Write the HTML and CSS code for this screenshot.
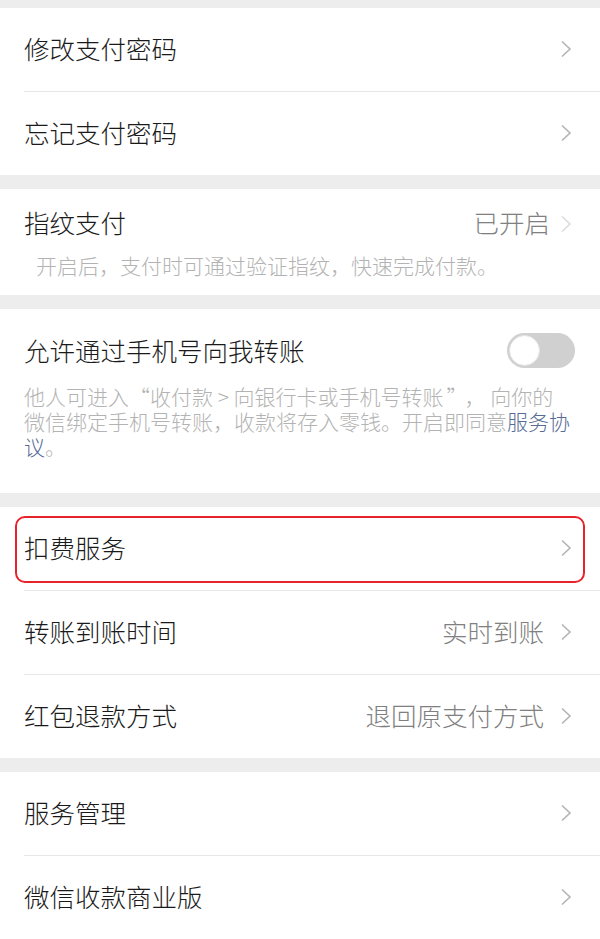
FILE: index.html
```html
<!DOCTYPE html>
<html lang="zh-CN">
<head>
<meta charset="utf-8">
<title>支付管理</title>
<link rel="stylesheet" href="styles.css">
</head>
<body>
<div class="page">
  <section class="group">
    <div class="cell"><div class="cell-inner"><span class="title">修改支付密码</span><span class="fill"></span><svg class="arrow" viewBox="0 0 12 18"><path d="M2 1.5 L10 9 L2 16.5"/></svg></div></div>
    <div class="cell"><div class="cell-inner"><span class="title">忘记支付密码</span><span class="fill"></span><svg class="arrow" viewBox="0 0 12 18"><path d="M2 1.5 L10 9 L2 16.5"/></svg></div></div>
  </section>

  <section class="group block finger">
    <div class="block-head"><span class="title">指纹支付</span><span class="fill"></span><span class="value">已开启</span><svg class="arrow faded" viewBox="0 0 12 18"><path d="M2 1.5 L10 9 L2 16.5"/></svg></div>
    <p class="desc desc-indent">开启后，支付时可通过验证指纹，快速完成付款。</p>
  </section>

  <section class="group block phone">
    <div class="block-head"><span class="title">允许通过手机号向我转账</span><span class="fill"></span><span class="switch"><span class="knob"></span></span></div>
    <p class="desc">他人可进入<span class="q q-open">“</span>收付款 &gt; 向银行卡或手机号转账<span class="q q-close">”</span>， 向你的<br>微信绑定手机号转账，收款将存入零钱。开启即同意<a class="link">服务协<br>议</a>。</p>
  </section>

  <section class="group">
    <div class="cell marked"><div class="cell-inner"><span class="title">扣费服务</span><span class="fill"></span><svg class="arrow" viewBox="0 0 12 18"><path d="M2 1.5 L10 9 L2 16.5"/></svg></div><span class="mark"></span></div>
    <div class="cell"><div class="cell-inner"><span class="title">转账到账时间</span><span class="fill"></span><span class="value">实时到账</span><svg class="arrow" viewBox="0 0 12 18"><path d="M2 1.5 L10 9 L2 16.5"/></svg></div></div>
    <div class="cell"><div class="cell-inner"><span class="title">红包退款方式</span><span class="fill"></span><span class="value">退回原支付方式</span><svg class="arrow" viewBox="0 0 12 18"><path d="M2 1.5 L10 9 L2 16.5"/></svg></div></div>
  </section>

  <section class="group">
    <div class="cell"><div class="cell-inner"><span class="title">服务管理</span><span class="fill"></span><svg class="arrow" viewBox="0 0 12 18"><path d="M2 1.5 L10 9 L2 16.5"/></svg></div></div>
    <div class="cell"><div class="cell-inner"><span class="title">微信收款商业版</span><span class="fill"></span><svg class="arrow" viewBox="0 0 12 18"><path d="M2 1.5 L10 9 L2 16.5"/></svg></div></div>
  </section>
</div>
</body>
</html>
```

FILE: styles.css
```css
html, body {
  margin: 0;
  padding: 0;
  background: #ededed;
}
body {
  font-family: "Noto Sans CJK SC", "Noto Sans", sans-serif;
  font-weight: 300;
  color: #1a1a1a;
  width: 600px;
  height: 939px;
  overflow: hidden;
}
.page {
  display: flex;
  flex-direction: column;
  gap: 14px;
  padding-top: 8px;
}
.group {
  background: #ffffff;
}
.cell {
  position: relative;
  padding-left: 24px;
}
.cell-inner {
  display: flex;
  align-items: center;
  height: 83px;
  box-sizing: border-box;
  padding: 0 28px 4px 0;
}
.cell + .cell .cell-inner {
  border-top: 1px solid #e7e7e7;
  height: 84px;
}
.title {
  font-size: 25.5px;
  line-height: 38px;
  color: #1a1a1a;
}
.fill {
  flex: 1;
}
.value {
  font-size: 25.5px;
  line-height: 38px;
  color: #808080;
  margin-right: 16px;
}
.arrow {
  width: 12px;
  height: 18px;
  margin-top: 3px;
  fill: none;
  stroke: #b3b3b3;
  stroke-width: 1.6;
}
.arrow.faded {
  stroke: #dcdcdc;
}
.block {
  padding: 14px 28px 16px 24px;
}
.block-head {
  display: flex;
  align-items: center;
}
.desc {
  margin: 10px 0 0;
  font-size: 21px;
  line-height: 28px;
  color: #b3b3b3;
}
.desc-indent {
  padding-left: 12px;
}
.finger .value {
  margin-right: 10px;
}
.phone {
  padding: 22px 25px 34px 24px;
}
.phone .desc {
  margin-top: 15px;
  line-height: 25px;
}
.q {
  display: inline-block;
  width: 21px;
  line-height: 25px;
  vertical-align: top;
}
.q-open {
  text-align: right;
  padding-right: 3px;
  box-sizing: border-box;
}
.q-close {
  text-align: left;
  padding-left: 3px;
  box-sizing: border-box;
}
.link {
  color: #576b95;
}
.switch {
  position: relative;
  width: 68px;
  height: 35px;
  margin-top: 1px;
  border-radius: 18px;
  background: #d0d0d0;
}
.knob {
  position: absolute;
  left: 2px;
  top: 2px;
  width: 31px;
  height: 31px;
  box-sizing: border-box;
  border-radius: 50%;
  background: #ffffff;
  border: 1px solid #e2e2e2;
}
.mark {
  position: absolute;
  left: 15px;
  right: 15px;
  top: 9px;
  bottom: 7px;
  border: 2px solid #e8232b;
  border-radius: 10px;
  pointer-events: none;
}
```
